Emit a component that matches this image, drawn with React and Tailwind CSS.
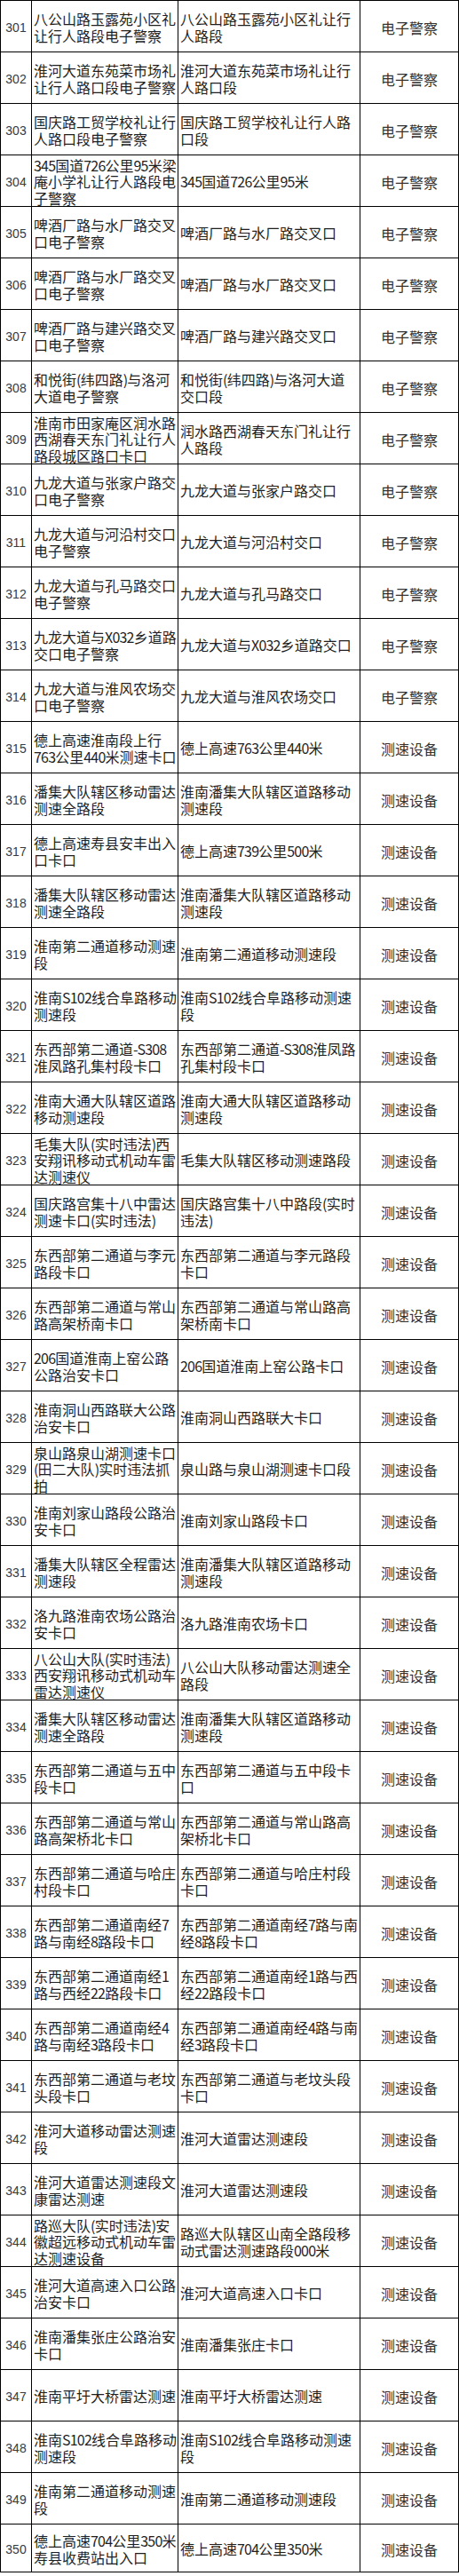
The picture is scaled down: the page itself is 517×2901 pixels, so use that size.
const rows = [
  [301, ["八公山路玉露苑小区礼", "让行人路段电子警察"], ["八公山路玉露苑小区礼让行", "人路段"]],
  [302, ["淮河大道东苑菜市场礼", "让行人路口段电子警察"], ["淮河大道东苑菜市场礼让行", "人路口段"]],
  [303, ["国庆路工贸学校礼让行", "人路口段电子警察"], ["国庆路工贸学校礼让行人路", "口段"]],
  [304, ["345国道726公里95米梁", "庵小学礼让行人路段电", "子警察"], ["345国道726公里95米"]],
  [305, ["啤酒厂路与水厂路交叉", "口电子警察"], ["啤酒厂路与水厂路交叉口"]],
  [306, ["啤酒厂路与水厂路交叉", "口电子警察"], ["啤酒厂路与水厂路交叉口"]],
  [307, ["啤酒厂路与建兴路交叉", "口电子警察"], ["啤酒厂路与建兴路交叉口"]],
  [308, ["和悦街(纬四路)与洛河", "大道电子警察"], ["和悦街(纬四路)与洛河大道", "交口段"]],
  [309, ["淮南市田家庵区润水路", "西湖春天东门礼让行人", "路段城区路口卡口"], ["润水路西湖春天东门礼让行", "人路段"]],
  [310, ["九龙大道与张家户路交", "口电子警察"], ["九龙大道与张家户路交口"]],
  [311, ["九龙大道与河沿村交口", "电子警察"], ["九龙大道与河沿村交口"]],
  [312, ["九龙大道与孔马路交口", "电子警察"], ["九龙大道与孔马路交口"]],
  [313, ["九龙大道与X032乡道路", "交口电子警察"], ["九龙大道与X032乡道路交口"]],
  [314, ["九龙大道与淮风农场交", "口电子警察"], ["九龙大道与淮风农场交口"]],
  [315, ["德上高速淮南段上行", "763公里440米测速卡口"], ["德上高速763公里440米"]],
  [316, ["潘集大队辖区移动雷达", "测速全路段"], ["淮南潘集大队辖区道路移动", "测速段"]],
  [317, ["德上高速寿县安丰出入", "口卡口"], ["德上高速739公里500米"]],
  [318, ["潘集大队辖区移动雷达", "测速全路段"], ["淮南潘集大队辖区道路移动", "测速段"]],
  [319, ["淮南第二通道移动测速", "段"], ["淮南第二通道移动测速段"]],
  [320, ["淮南S102线合阜路移动", "测速段"], ["淮南S102线合阜路移动测速", "段"]],
  [321, ["东西部第二通道-S308", "淮凤路孔集村段卡口"], ["东西部第二通道-S308淮凤路", "孔集村段卡口"]],
  [322, ["淮南大通大队辖区道路", "移动测速段"], ["淮南大通大队辖区道路移动", "测速段"]],
  [323, ["毛集大队(实时违法)西", "安翔讯移动式机动车雷", "达测速仪"], ["毛集大队辖区移动测速路段"]],
  [324, ["国庆路宫集十八中雷达", "测速卡口(实时违法)"], ["国庆路宫集十八中路段(实时", "违法)"]],
  [325, ["东西部第二通道与李元", "路段卡口"], ["东西部第二通道与李元路段", "卡口"]],
  [326, ["东西部第二通道与常山", "路高架桥南卡口"], ["东西部第二通道与常山路高", "架桥南卡口"]],
  [327, ["206国道淮南上窑公路", "公路治安卡口"], ["206国道淮南上窑公路卡口"]],
  [328, ["淮南洞山西路联大公路", "治安卡口"], ["淮南洞山西路联大卡口"]],
  [329, ["泉山路泉山湖测速卡口", "(田二大队)实时违法抓", "拍"], ["泉山路与泉山湖测速卡口段"]],
  [330, ["淮南刘家山路段公路治", "安卡口"], ["淮南刘家山路段卡口"]],
  [331, ["潘集大队辖区全程雷达", "测速段"], ["淮南潘集大队辖区道路移动", "测速段"]],
  [332, ["洛九路淮南农场公路治", "安卡口"], ["洛九路淮南农场卡口"]],
  [333, ["八公山大队(实时违法)", "西安翔讯移动式机动车", "雷达测速仪"], ["八公山大队移动雷达测速全", "路段"]],
  [334, ["潘集大队辖区移动雷达", "测速全路段"], ["淮南潘集大队辖区道路移动", "测速段"]],
  [335, ["东西部第二通道与五中", "段卡口"], ["东西部第二通道与五中段卡", "口"]],
  [336, ["东西部第二通道与常山", "路高架桥北卡口"], ["东西部第二通道与常山路高", "架桥北卡口"]],
  [337, ["东西部第二通道与哈庄", "村段卡口"], ["东西部第二通道与哈庄村段", "卡口"]],
  [338, ["东西部第二通道南经7", "路与南经8路段卡口"], ["东西部第二通道南经7路与南", "经8路段卡口"]],
  [339, ["东西部第二通道南经1", "路与西经22路段卡口"], ["东西部第二通道南经1路与西", "经22路段卡口"]],
  [340, ["东西部第二通道南经4", "路与南经3路段卡口"], ["东西部第二通道南经4路与南", "经3路段卡口"]],
  [341, ["东西部第二通道与老坟", "头段卡口"], ["东西部第二通道与老坟头段", "卡口"]],
  [342, ["淮河大道移动雷达测速", "段"], ["淮河大道雷达测速段"]],
  [343, ["淮河大道雷达测速段文", "康雷达测速"], ["淮河大道雷达测速段"]],
  [344, ["路巡大队(实时违法)安", "徽超远移动式机动车雷", "达测速设备"], ["路巡大队辖区山南全路段移", "动式雷达测速路段000米"]],
  [345, ["淮河大道高速入口公路", "治安卡口"], ["淮河大道高速入口卡口"]],
  [346, ["淮南潘集张庄公路治安", "卡口"], ["淮南潘集张庄卡口"]],
  [347, ["淮南平圩大桥雷达测速"], ["淮南平圩大桥雷达测速"]],
  [348, ["淮南S102线合阜路移动", "测速段"], ["淮南S102线合阜路移动测速", "段"]],
  [349, ["淮南第二通道移动测速", "段"], ["淮南第二通道移动测速段"]],
  [350, ["德上高速704公里350米", "寿县收费站出入口"], ["德上高速704公里350米"]],
];

// latin runs are squeezed a little so digits take about half a cjk cell
const Line = ({ text }) => (
  <div>
    {text.split(/([0-9A-Za-z()\-]+)/).map((part, i) =>
      i % 2 === 1 ? (
        <span key={i} className="inline-block tracking-[-0.8px]">
          {part}
        </span>
      ) : (
        part
      )
    )}
  </div>
);

// one wrapped cell, lines are fixed to match the sheet
const Lines = ({ lines }) => (
  <div
    className={`whitespace-nowrap ${
      lines.length > 2 ? "leading-[18.5px]" : "leading-[19px]"
    }`}
  >
    {lines.map((l, i) => (
      <Line key={i} text={l} />
    ))}
  </div>
);

export default function App() {
  return (
    <div className="w-[517px] bg-white pb-[5px]">
      <div
        className="border-t border-l border-r border-black text-[16px] text-[#1f1f1f]"
        style={{ fontFamily: '"Noto Sans CJK SC", "Liberation Sans", sans-serif' }}
      >
        {rows.map(([no, name, place], idx) => (
          <div
            key={no}
            className={`flex border-b border-black ${
              idx === rows.length - 1 ? "h-[54px]" : "h-[58px]"
            }`}
          >
            <div className="w-[35px] shrink-0 border-r border-black flex items-center justify-center pt-[3px] text-[14px] text-[#3a3a3a] font-['Liberation_Sans',sans-serif]">
              {no}
            </div>
            <div className="w-[165px] shrink-0 border-r border-black flex items-center pl-[2px] pt-[2px]">
              <Lines lines={name} />
            </div>
            <div className="w-[205px] shrink-0 border-r border-black flex items-center pl-[2px] pt-[2px]">
              <Lines lines={place} />
            </div>
            <div className="flex-1 flex items-center justify-center pt-[2px] text-[#333]">
              {no <= 314 ? "电子警察" : "测速设备"}
            </div>
          </div>
        ))}
      </div>
    </div>
  );
}
